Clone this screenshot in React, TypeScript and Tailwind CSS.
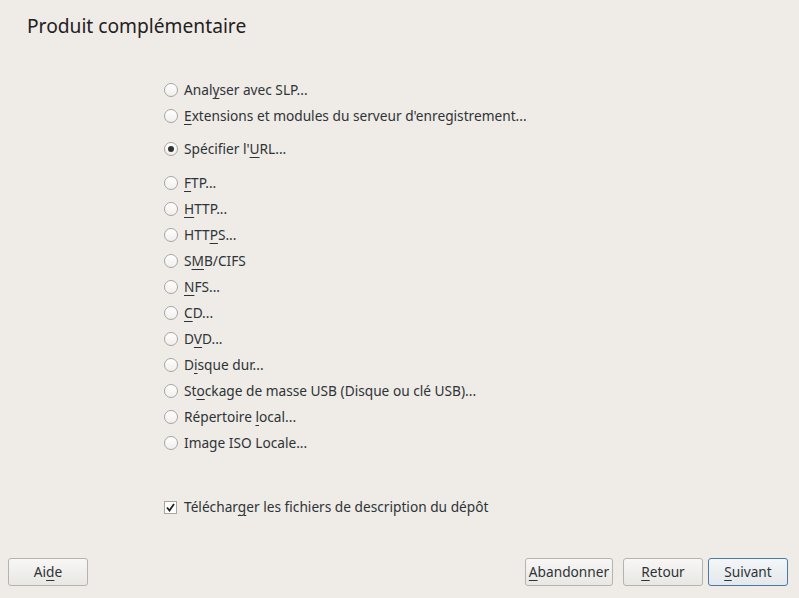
import React from "react";

const font = { fontFamily: '"Noto Sans", "DejaVu Sans", sans-serif' };

function Label({ text, m }: { text: string; m?: number }) {
  if (m === undefined) return <span>{text}</span>;
  return (
    <span>
      {text.slice(0, m)}
      <span className="underline underline-offset-[3px] decoration-1">{text[m]}</span>
      {text.slice(m + 1)}
    </span>
  );
}

function Radio({ text, m, checked }: { text: string; m?: number; checked?: boolean }) {
  return (
    <div className="flex h-[26px] items-center">
      <div className="flex h-[14px] w-[14px] items-center justify-center rounded-full border border-[#a8a5a1] bg-gradient-to-b from-[#ffffff] to-[#f1efed]">
        {checked && <div className="h-[6px] w-[6px] rounded-full bg-[#2e3436]" />}
      </div>
      <div className="ml-[6px] text-[13.7px] text-[#2e3436]">
        <Label text={text} m={m} />
      </div>
    </div>
  );
}

function Button({ text, m, primary, w }: { text: string; m: number; primary?: boolean; w: string }) {
  return (
    <div
      className={`flex h-[28px] items-center justify-center rounded-[3px] border text-[13.7px] text-[#2e3436] ${w} ${
        primary
          ? "border-[#4a79a6] bg-gradient-to-b from-[#f4f6f8] to-[#e4e8ec]"
          : "border-[#b6b2ad] bg-gradient-to-b from-[#f8f7f6] to-[#e9e7e4]"
      }`}
    >
      <Label text={text} m={m} />
    </div>
  );
}

export default function App() {
  return (
    <div className="flex h-[598px] w-[799px] flex-col bg-[#efebe7]" style={font}>
      <div className="ml-[27px] mt-[13px] h-[26px] text-[19.2px] leading-[26px] text-[#1f2122]">
        Produit complémentaire
      </div>
      <div className="ml-[164px] mt-[38px] flex flex-col">
        <Radio text="Analyser avec SLP..." m={4} />
        <Radio text="Extensions et modules du serveur d'enregistrement..." m={0} />
        <div className="mt-[7px]">
          <Radio text="Spécifier l'URL..." m={12} checked />
        </div>
        <div className="mt-[8px] flex flex-col">
          <Radio text="FTP..." m={0} />
          <Radio text="HTTP..." m={0} />
          <Radio text="HTTPS..." m={3} />
          <Radio text="SMB/CIFS" m={1} />
          <Radio text="NFS..." m={0} />
          <Radio text="CD..." m={0} />
          <Radio text="DVD..." m={1} />
          <Radio text="Disque dur..." m={1} />
          <Radio text="Stockage de masse USB (Disque ou clé USB)..." m={2} />
          <Radio text="Répertoire local..." m={11} />
          <Radio text="Image ISO Locale..." />
        </div>
        <div className="mt-[38px] flex h-[26px] items-center">
          <div className="flex h-[13px] w-[13px] items-center justify-center border border-[#a8a5a1] bg-white">
            <svg width="11" height="11" viewBox="0 0 11 11">
              <path d="M2 5.5 L4.5 8.5 L9 2" fill="none" stroke="#1f2122" strokeWidth="1.8" />
            </svg>
          </div>
          <div className="ml-[7px] text-[13.7px] text-[#2e3436]">
            <Label text="Télécharger les fichiers de description du dépôt" m={8} />
          </div>
        </div>
      </div>
      <div className="mt-auto mb-[12px] flex pl-[8px] pr-[11px]">
        <Button text="Aide" m={2} w="w-[80px]" />
        <div className="ml-auto flex gap-[10px]">
          <Button text="Abandonner" m={0} w="w-[88px]" />
          <Button text="Retour" m={0} w="w-[80px]" />
        </div>
        <div className="ml-[5px]">
          <Button text="Suivant" m={0} primary w="w-[80px]" />
        </div>
      </div>
    </div>
  );
}
